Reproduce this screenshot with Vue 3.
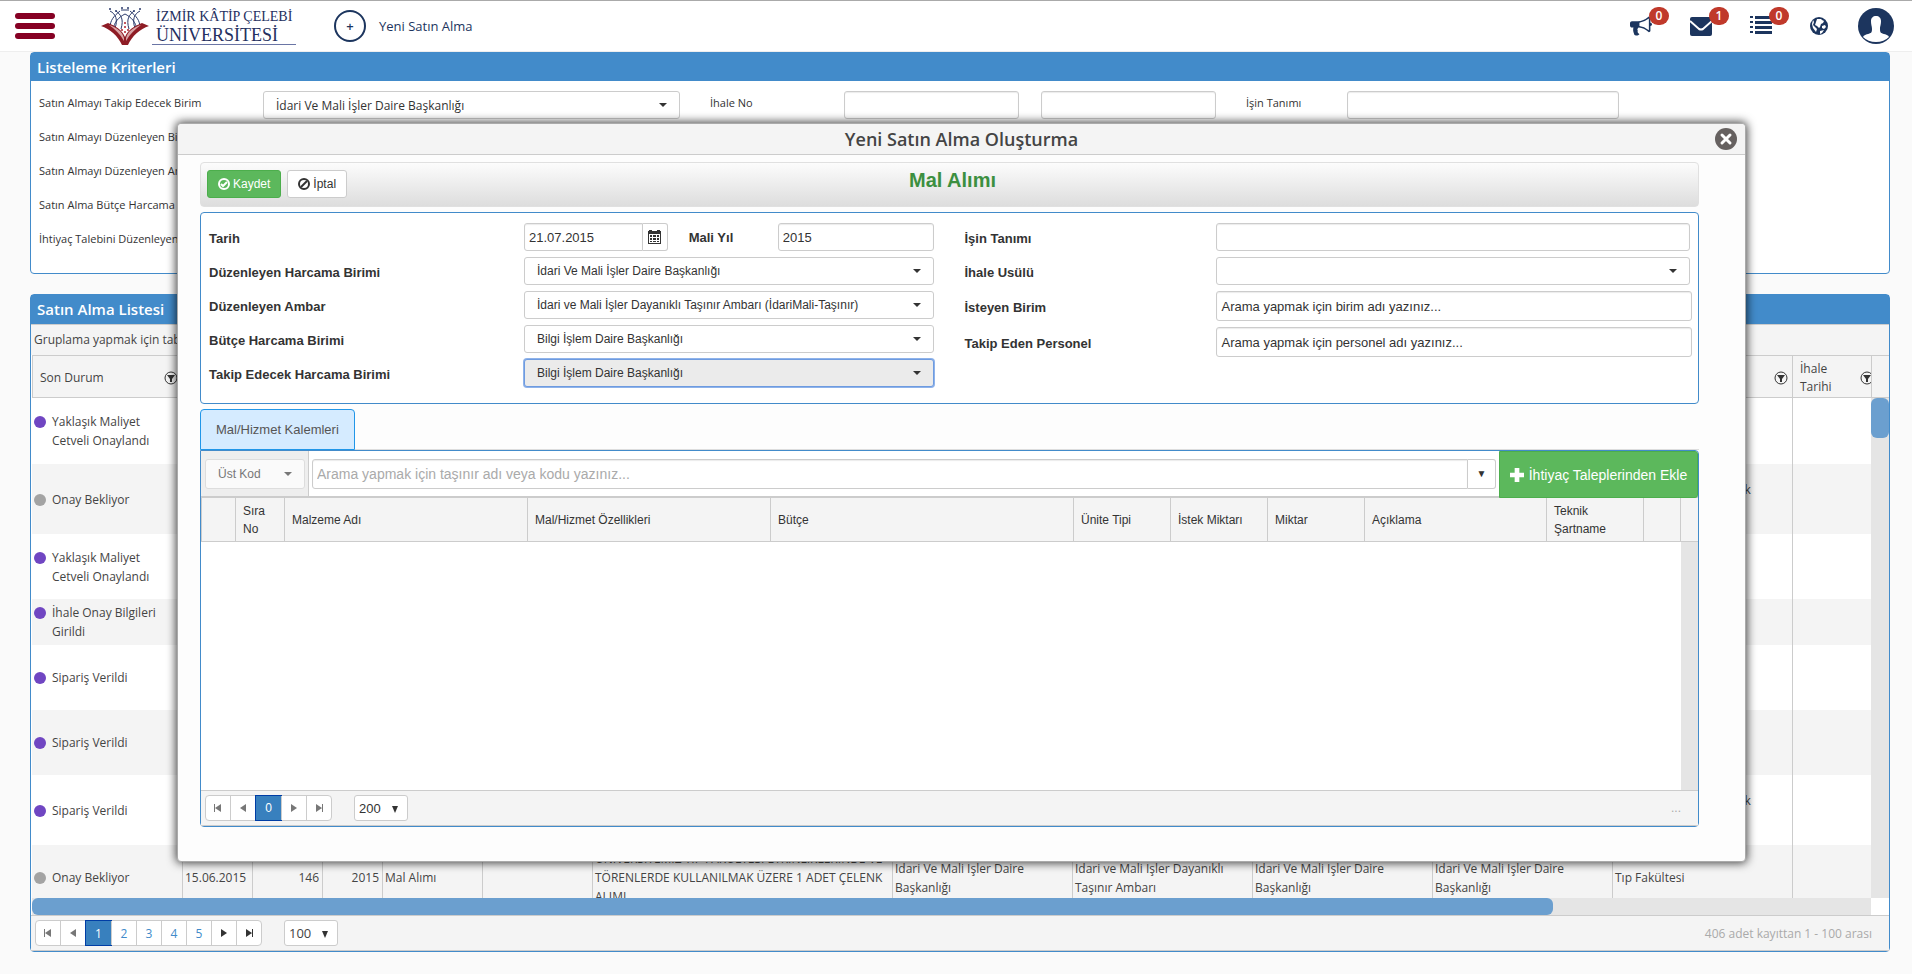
<template>
  <div class="page">
    <header class="topbar">
      <button class="menu-btn" aria-label="Menü"><i></i><i></i><i></i></button>
      <a href="#" class="logo">
        <svg width="50" height="40" viewBox="0 0 50 40">
          <g fill="none" stroke="#2b3a6b" stroke-width="1">
            <path d="M10 5c6 3 8 9 5 17M16 5c5 4 8 8 5 18M40 5c-6 3-8 9-5 17M34 5c-5 4-8 8-5 18" />
            <path d="M10 22c0-8 4-12 10-17M40 22c0-8-4-12-10-17M13 24c1-8 6-13 12-16M37 24c-1-8-6-13-12-16M21 4h8" />
          </g>
          <g fill="#2b3a6b">
            <circle cx="10" cy="3" r="1" /><circle cx="16" cy="5" r="1" /><circle cx="22" cy="2" r="1" />
            <circle cx="28" cy="2" r="1" /><circle cx="34" cy="5" r="1" /><circle cx="40" cy="3" r="1" />
          </g>
          <g fill="#b0202c">
            <circle cx="25" cy="17" r="1" /><circle cx="25" cy="21" r="1" /><circle cx="22" cy="24" r="1" />
            <circle cx="28" cy="24" r="1" /><circle cx="25" cy="26" r="1" />
          </g>
          <path d="M1 20l7-3c8 3 14 7 17 14v8h-3C18 30 10 23 1 20z" fill="#8e1c25" />
          <path d="M49 20l-7-3c-8 3-14 7-17 14v8h3C32 30 40 23 49 20z" fill="#8e1c25" />
          <path d="M9 19c7 2 13 6 15 13v3C20 28 15 23 9 19zM41 19c-7 2-13 6-15 13v3c4-7 9-12 15-16z" fill="#d9a3a5" />
        </svg>
        <span class="logo-text"><b>İZMİR KÂTİP ÇELEBİ</b><span>ÜNİVERSİTESİ</span></span>
      </a>
      <a href="#" class="new-link"><span class="plus">+</span>Yeni Satın Alma</a>
      <nav class="tools">
        <button aria-label="Duyurular">
          <svg width="22" height="22" viewBox="0 0 1792 1792"><path :d="bullhorn" /></svg><em>0</em>
        </button>
        <button aria-label="Mesajlar">
          <svg width="22" height="22" viewBox="0 0 22 22">
            <path d="M2 2h18q2 0 2 2v15q0 2-2 2H2q-2 0-2-2V4q0-2 2-2z" />
            <path d="M0 6l9 8q2 1 4 0l9-8" fill="none" stroke="#fff" stroke-width="2" />
          </svg><em>1</em>
        </button>
        <button aria-label="Görevler">
          <svg width="22" height="22" viewBox="0 0 22 22">
            <path d="M0 1h3v2H0zM5 1h17v3H5zM0 6h3v2H0zM5 6h17v3H5zM0 11h3v2H0zM5 11h17v3H5zM0 16h3v2H0zM5 16h17v3H5z" />
          </svg><em>0</em>
        </button>
        <button aria-label="Dil">
          <svg width="18" height="18" viewBox="0 0 18 18">
            <circle cx="9" cy="9" r="9" />
            <path d="M7 2h4l1 1 2 1-1 2-2 1-1 3-1 1-2-2-2-1 1-3zM3 3l1 2-1 3 2 2 2 2-1 3-3-4-1-4zM12 9l3-1 1 2-2 2-2-1zM10 14l4-1-2 3-2 1z" fill="#fff" />
          </svg>
        </button>
        <button class="avatar" aria-label="Profil">
          <svg width="36" height="36" viewBox="0 0 36 36">
            <circle cx="18" cy="18" r="18" />
            <path d="M18 8c3 0 5 2 5 5 0 4-1 5-1 8 0 4 1 4 4 5 3 1 4 1 5 3q-5 5-13 5T5 29c1-2 2-2 5-3 3-1 4-1 4-5 0-3-1-4-1-8 0-3 2-5 5-5z" fill="#fff" />
          </svg>
        </button>
      </nav>
    </header>

    <section class="panel criteria">
      <h2>Listeleme Kriterleri</h2>
      <div class="criteria-body">
        <div class="criteria-row">
          <label for="takip">Satın Almayı Takip Edecek Birim</label>
          <span class="select"><select id="takip"><option>İdari Ve Mali İşler Daire Başkanlığı</option></select></span>
          <label for="ihale-no" class="inset">İhale No</label>
          <input id="ihale-no" type="text" />
          <span></span>
          <input type="text" aria-label="İhale No bitiş" />
          <label for="tanim" class="inset">İşin Tanımı</label>
          <input id="tanim" type="text" />
        </div>
        <div v-for="(label, i) in criteria" :key="label" class="criteria-row">
          <label :for="'kriter' + i">{{ label }}</label>
          <span class="select"><select :id="'kriter' + i"></select></span>
        </div>
      </div>
    </section>

    <section class="panel list">
      <h2>Satın Alma Listesi</h2>
      <div class="group-bar">Gruplama yapmak için tablo başlıklarını buraya sürükleyiniz</div>
      <div class="list-head">
        <table class="list-table">
          <colgroup><col v-for="(w, i) in listCols" :key="i" :style="{ width: w + 'px' }" /></colgroup>
          <thead>
            <tr>
              <th v-for="(h, i) in listHeads" :key="i">
                <div class="th-inner">
                  <span>{{ h }}</span>
                  <svg width="14" height="14" viewBox="0 0 14 14">
                    <circle cx="7" cy="7" r="6" fill="none" stroke="#333" />
                    <path d="M3 4h8L8 8v3H6V8z" fill="#333" />
                  </svg>
                </div>
              </th>
            </tr>
          </thead>
        </table>
      </div>
      <div class="list-body">
        <div class="list-rows">
          <table class="list-table">
            <colgroup><col v-for="(w, i) in listCols" :key="i" :style="{ width: w + 'px' }" /></colgroup>
            <tbody>
              <tr v-for="(row, i) in rows" :key="i" :style="{ height: row.height + 'px' }">
                <td><div class="status"><i :class="{ waiting: row.waiting }"></i><span>{{ row.status }}</span></div></td>
                <td v-for="n in 12" :key="n" :class="{ num: n === 2 || n === 3 }">{{ row.cells?.[n - 1] }}</td>
              </tr>
            </tbody>
          </table>
        </div>
        <div class="v-scroll"><span></span></div>
      </div>
      <div class="h-scroll"><span></span></div>
      <div class="pager">
        <div class="pages">
          <button class="off" aria-label="İlk"><svg width="8" height="8" viewBox="0 0 8 8"><path d="M0 0h1v8H0zM7 0v8L1 4z" /></svg></button>
          <button class="off" aria-label="Önceki"><svg width="8" height="8" viewBox="0 0 8 8"><path d="M7 0v8L1 4z" /></svg></button>
          <button v-for="n in 5" :key="n" :class="{ current: n === 1 }">{{ n }}</button>
          <button aria-label="Sonraki"><svg width="8" height="8" viewBox="0 0 8 8"><path d="M1 0v8l6-4z" /></svg></button>
          <button aria-label="Son"><svg width="8" height="8" viewBox="0 0 8 8"><path d="M7 0h1v8H7zM1 0v8l6-4z" /></svg></button>
        </div>
        <span class="page-size"><select aria-label="Sayfa boyutu"><option>100</option></select></span>
        <span class="info">406 adet kayıttan 1 - 100 arası</span>
      </div>
    </section>

    <div class="dialog" role="dialog">
      <div class="dialog-title">
        <h1>Yeni Satın Alma Oluşturma</h1>
        <button class="close" aria-label="Kapat">
          <svg width="22" height="22" viewBox="0 0 22 22">
            <circle cx="11" cy="11" r="11" fill="#666160" />
            <path d="M7 7l8 8M15 7l-8 8" stroke="#fff" stroke-width="3" stroke-linecap="round" />
          </svg>
        </button>
      </div>
      <div class="dialog-body">
        <div class="toolbar">
          <div class="actions">
            <button class="btn save">
              <svg width="12" height="12" viewBox="0 0 12 12" fill="none" stroke="#fff" stroke-width="2"><circle cx="6" cy="6" r="5" /><path d="M3 6l2 2 4-4" /></svg>
              Kaydet
            </button>
            <button class="btn">
              <svg width="12" height="12" viewBox="0 0 12 12" fill="none" stroke="#333" stroke-width="2"><circle cx="6" cy="6" r="5" /><path d="M9 3L3 9" /></svg>
              İptal
            </button>
          </div>
          <h3>Mal Alımı</h3>
        </div>

        <form class="form" @submit.prevent>
          <div class="col">
            <div class="field">
              <label for="tarih">Tarih</label>
              <div class="date-row">
                <span class="date">
                  <input id="tarih" v-model="tarih" type="text" />
                  <button type="button" aria-label="Takvim">
                    <svg width="13" height="14" viewBox="0 0 13 14">
                      <path d="M1 0h3v1h5V0h3v1h1v13H0V1h1zM1 4v9h11V4z" fill="#333" fill-rule="evenodd" />
                      <path d="M2 5h2v2H2zM5 5h3v2H5zM9 5h2v2H9zM2 8h2v2H2zM5 8h3v2H5zM9 8h2v2H9zM2 11h2v1H2zM5 11h3v1H5zM9 11h2v1H9z" fill="#333" />
                    </svg>
                  </button>
                </span>
                <label for="yil">Mali Yıl</label>
                <input id="yil" v-model="yil" type="text" />
              </div>
            </div>
            <div v-for="(f, i) in units" :key="f.label" class="field">
              <label :for="'birim' + i">{{ f.label }}</label>
              <span class="select" :class="{ focused: f.focused }"><select :id="'birim' + i"><option>{{ f.value }}</option></select></span>
            </div>
          </div>
          <div class="col right">
            <div class="field">
              <label for="isin-tanimi">İşin Tanımı</label>
              <input id="isin-tanimi" type="text" />
            </div>
            <div class="field">
              <label for="usul">İhale Usülü</label>
              <span class="select"><select id="usul"></select></span>
            </div>
            <div class="field">
              <label for="isteyen">İsteyen Birim</label>
              <input id="isteyen" class="search" type="text" placeholder="Arama yapmak için birim adı yazınız..." />
            </div>
            <div class="field">
              <label for="personel">Takip Eden Personel</label>
              <input id="personel" class="search" type="text" placeholder="Arama yapmak için personel adı yazınız..." />
            </div>
          </div>
        </form>

        <div class="tabs"><button class="tab">Mal/Hizmet Kalemleri</button></div>
        <div class="items">
          <div class="items-bar">
            <div class="code">
              <span class="select"><select aria-label="Üst Kod"><option>Üst Kod</option></select></span>
            </div>
            <div class="item-search">
              <input type="text" aria-label="Taşınır ara" placeholder="Arama yapmak için taşınır adı veya kodu yazınız..." />
              <button aria-label="Aç">▼</button>
            </div>
            <button class="add">
              <svg width="14" height="14" viewBox="0 0 12 12"><path d="M4 0h4v4h4v4H8v4H4V8H0V4h4z" fill="#fff" /></svg>
              İhtiyaç Taleplerinden Ekle
            </button>
          </div>
          <table class="items-table">
            <colgroup><col v-for="(c, i) in itemCols" :key="i" :style="{ width: c.width + 'px' }" /></colgroup>
            <thead><tr><th v-for="(c, i) in itemCols" :key="i">{{ c.title }}</th></tr></thead>
          </table>
          <div class="items-body"><div class="track"></div></div>
          <div class="pager">
            <div class="pages">
              <button class="off" aria-label="İlk"><svg width="8" height="8" viewBox="0 0 8 8"><path d="M0 0h1v8H0zM7 0v8L1 4z" /></svg></button>
              <button class="off" aria-label="Önceki"><svg width="8" height="8" viewBox="0 0 8 8"><path d="M7 0v8L1 4z" /></svg></button>
              <button class="current">0</button>
              <button class="off" aria-label="Sonraki"><svg width="8" height="8" viewBox="0 0 8 8"><path d="M1 0v8l6-4z" /></svg></button>
              <button class="off" aria-label="Son"><svg width="8" height="8" viewBox="0 0 8 8"><path d="M7 0h1v8H7zM1 0v8l6-4z" /></svg></button>
            </div>
            <span class="page-size"><select aria-label="Sayfa boyutu"><option>200</option></select></span>
            <span class="info">...</span>
          </div>
        </div>
      </div>
    </div>
  </div>
</template>

<script setup>
import { ref } from 'vue';

const tarih = ref('21.07.2015');
const yil = ref('2015');

const bullhorn = 'M1664 640q53 0 90.500 37.500t37.500 90.500-37.500 90.500-90.500 37.500v384q0 52-38 90t-90 38q-417-347-812-380-58 19-91 66t-31 100.500 40 92.500q-20 33-23 65.500t6 58 33.500 55 48 50 61.500 50.500q-29 58-111.500 83t-168.500 11.500-132-55.500q-7-23-29.500-87.500t-32-94.500-23-89-15-101 3.500-98.500 22-110.500h-122q-66 0-113-47t-47-113v-192q0-66 47-113t113-47h480q435 0 896-384 52 0 90 38t38 90v384zm-128 604v-954q-394 302-768 343v270q377 42 768 341z';

const criteria = [
  'Satın Almayı Düzenleyen Birim',
  'Satın Almayı Düzenleyen Ambar',
  'Satın Alma Bütçe Harcama Birimi',
  'İhtiyaç Talebini Düzenleyen Birim'
];

const listCols = [150, 70, 70, 60, 100, 110, 300, 180, 180, 180, 180, 180, 86];
const listHeads = ['Son Durum', '', '', '', '', '', '', '', '', '', '', '', 'İhale Tarihi'];

const idari = 'İdari Ve Mali İşler Daire Başkanlığı';
const faculty = [...Array(10).fill(''), 'Mühendislik ve Mimarlık Fakültesi'];
const rows = [
  { status: 'Yaklaşık Maliyet Cetveli Onaylandı', height: 66 },
  { status: 'Onay Bekliyor', waiting: true, height: 70, cells: faculty },
  { status: 'Yaklaşık Maliyet Cetveli Onaylandı', height: 65 },
  { status: 'İhale Onay Bilgileri Girildi', height: 46 },
  { status: 'Sipariş Verildi', height: 65 },
  { status: 'Sipariş Verildi', height: 65 },
  { status: 'Sipariş Verildi', height: 70, cells: faculty },
  {
    status: 'Onay Bekliyor',
    waiting: true,
    height: 65,
    cells: [
      '15.06.2015', '146', '2015', 'Mal Alımı', '',
      'ÜNİVERSİTEMİZ TIP FAKÜLTESİ ETKİNLİKLERİNDE VE TÖRENLERDE KULLANILMAK ÜZERE 1 ADET ÇELENK ALIMI',
      idari, 'İdari ve Mali İşler Dayanıklı Taşınır Ambarı', idari, idari, 'Tıp Fakültesi'
    ]
  }
];

const units = [
  { label: 'Düzenleyen Harcama Birimi', value: idari },
  { label: 'Düzenleyen Ambar', value: 'İdari ve Mali İşler Dayanıklı Taşınır Ambarı (İdariMali-Taşınır)' },
  { label: 'Bütçe Harcama Birimi', value: 'Bilgi İşlem Daire Başkanlığı' },
  { label: 'Takip Edecek Harcama Birimi', value: 'Bilgi İşlem Daire Başkanlığı', focused: true }
];

const itemCols = [
  { title: '', width: 34 },
  { title: 'Sıra No', width: 49 },
  { title: 'Malzeme Adı', width: 243 },
  { title: 'Mal/Hizmet Özellikleri', width: 243 },
  { title: 'Bütçe', width: 303 },
  { title: 'Ünite Tipi', width: 97 },
  { title: 'İstek Miktarı', width: 97 },
  { title: 'Miktar', width: 97 },
  { title: 'Açıklama', width: 182 },
  { title: 'Teknik Şartname', width: 97 },
  { title: '', width: 37 },
  { title: '', width: 18 }
];
</script>

<style>
body {
  margin: 0;
  background: #fafafa;
}
</style>

<style scoped>
* {
  box-sizing: border-box;
}

.page {
  display: flex;
  flex-direction: column;
  height: 100vh;
  min-height: 800px;
  padding-bottom: 22px;
  overflow: hidden;
  font-family: "Open Sans", "Liberation Sans", sans-serif;
  font-size: 12px;
  color: #444;
}

button,
input,
select {
  margin: 0;
  font: inherit;
  color: inherit;
}

button {
  display: flex;
  align-items: center;
  justify-content: center;
  padding: 0;
  border: 0;
  background: none;
  cursor: pointer;
}

h1,
h2,
h3 {
  margin: 0;
}

/* top bar */
.topbar {
  display: flex;
  align-items: center;
  flex: none;
  height: 52px;
  padding: 0 18px 0 15px;
  background: #fff;
  border-top: 1px solid #aaa;
  border-bottom: 1px solid #eee;
}

.menu-btn {
  flex-direction: column;
  gap: 4px;
  width: 40px;
}

.menu-btn i {
  width: 40px;
  height: 6px;
  border-radius: 3px;
  background: #850023;
}

.logo {
  display: flex;
  align-items: center;
  gap: 2px;
  margin-left: 45px;
  color: #25305f;
  text-decoration: none;
}

.logo-text {
  display: flex;
  flex-direction: column;
  width: 144px;
  padding: 0 4px;
  border-bottom: 1px solid #6a75a5;
  font-family: "Liberation Serif", serif;
  font-size: 18px;
  line-height: 18px;
}

.logo-text b {
  font-size: 14px;
  font-weight: 400;
  white-space: nowrap;
}

.new-link {
  display: flex;
  align-items: center;
  gap: 13px;
  margin-left: 38px;
  color: #1c355e;
  font-size: 13px;
  text-decoration: none;
}

.plus {
  display: flex;
  align-items: center;
  justify-content: center;
  width: 32px;
  height: 32px;
  border: 2px solid #1c355e;
  border-radius: 50%;
  font-weight: 600;
}

.tools {
  display: flex;
  align-items: center;
  gap: 38px;
  margin-left: auto;
}

.tools button {
  position: relative;
}

.tools .avatar {
  margin-left: -8px;
}

.tools svg {
  fill: #1c355e;
}

.tools em {
  position: absolute;
  top: -8px;
  left: 19px;
  width: 20px;
  height: 18px;
  border-radius: 9px;
  background: #c0392b;
  color: #fff;
  font-size: 12px;
  font-style: normal;
  font-weight: 600;
  line-height: 18px;
  text-align: center;
}

/* panels */
.panel {
  margin: 0 22px 0 30px;
  border: 1px solid #428bca;
  border-radius: 4px;
  background: #fff;
}

.panel h2 {
  padding-left: 6px;
  background: #428bca;
  color: #fff;
  font-size: 15px;
  font-weight: 600;
  line-height: 28px;
}

.criteria {
  flex: none;
}

.criteria-body {
  padding: 10px 6px 12px 8px;
}

.criteria-row {
  display: grid;
  grid-template-columns: 224px 417fr 164px 175fr 22px 175fr 131px 272fr 264fr;
  height: 34px;
  color: #333;
}

.criteria-row label {
  font-size: 11px;
  line-height: 24px;
  white-space: nowrap;
}

.criteria-row .inset {
  padding-left: 30px;
}

input[type="text"],
.select,
.page-size {
  width: 100%;
  min-width: 0;
  height: 28px;
  border: 1px solid #ccc;
  border-radius: 3px;
  background: #fff;
}

input[type="text"] {
  padding: 0 4px;
  box-shadow: inset 0 1px 1px rgba(0, 0, 0, 0.08);
  outline: none;
}

.select,
.page-size {
  position: relative;
  display: block;
}

.select select,
.page-size select {
  appearance: none;
  display: block;
  width: 100%;
  height: 100%;
  padding: 0 30px 0 12px;
  border: 0;
  background: none;
  outline: none;
}

.select::after {
  content: "";
  position: absolute;
  top: 50%;
  right: 12px;
  margin-top: -2px;
  border: 4px solid transparent;
  border-top-color: #333;
  border-bottom: 0;
  pointer-events: none;
}

.list {
  display: flex;
  flex-direction: column;
  flex: 1;
  min-height: 0;
  margin-top: 20px;
}

.list h2 {
  line-height: 29px;
}

.group-bar {
  height: 31px;
  padding-left: 3px;
  border-top: 1px solid #ccc;
  background: #f4f4f4;
  line-height: 30px;
  white-space: nowrap;
}

.list-head {
  display: flex;
  flex: none;
  margin-left: 1px;
  padding-right: 18px;
  border-top: 1px solid #ccc;
  border-bottom: 1px solid #ccc;
  background: #f4f4f4;
  overflow: hidden;
}

/* filler above the vertical scrollbar */
.list-head::after {
  content: "";
  flex: none;
  width: 18px;
  margin-right: -18px;
  border-left: 1px solid #ccc;
  background: #f4f4f4;
}

.list-table {
  flex: none;
  width: calc(100% + 7px);
  margin-right: -7px;
  border-collapse: separate;
  border-spacing: 0;
  table-layout: fixed;
}

.list-table th {
  height: 41px;
  padding: 2px 4px 0 7px;
  border-left: 1px solid #ccc;
  font-weight: 400;
  line-height: 18px;
  text-align: left;
}

.th-inner {
  display: flex;
  align-items: center;
  justify-content: space-between;
}

.th-inner svg {
  flex: none;
}

.list-body {
  display: flex;
  flex: 1;
  min-height: 0;
}

.list-rows {
  flex: 1;
  overflow: hidden;
  margin-left: 1px;
}

.list-table td {
  padding: 0 3px 0 2px;
  border-left: 1px solid #ccc;
  line-height: 19px;
}

.list-table td:first-child {
  border-left: 0;
}

.list-table tr:nth-child(even) td {
  background: #f4f4f4;
}

.list-table .num {
  text-align: right;
}

.status {
  display: flex;
  gap: 6px;
}

.status i {
  flex: none;
  width: 12px;
  height: 12px;
  margin-top: 4px;
  border-radius: 50%;
  background: #7046c2;
}

.status .waiting {
  background: #a3a3a3;
}

.status span {
  width: 106px;
}

.v-scroll {
  width: 18px;
  background: #e5e5e5;
}

.v-scroll span {
  display: block;
  height: 40px;
  border-radius: 6px;
  background: #6b9fcf;
}

.h-scroll {
  flex: none;
  height: 17px;
  margin: 0 18px 0 1px;
  background: #e5e5e5;
}

.h-scroll span {
  display: block;
  width: 82.7%;
  height: 17px;
  border-radius: 6px;
  background: #6b9fcf;
}

.pager {
  display: flex;
  align-items: center;
  flex: none;
  height: 36px;
  padding: 0 17px 0 4px;
  border-top: 1px solid #ccc;
  border-bottom: 1px solid #ccc;
  background: #f4f4f4;
}

.pages {
  display: flex;
  border: 1px solid #ccc;
  border-radius: 4px;
  background: #fff;
}

.pages button {
  width: 25px;
  height: 24px;
  border-left: 1px solid #ccc;
  color: #428bca;
}

.pages button:first-child {
  width: 24px;
  border-left: 0;
}

.pages svg {
  fill: #333;
}

.pages .off svg {
  fill: #777;
}

.pages .current {
  width: 27px;
  height: 26px;
  margin: -1px -1px -1px 0;
  border: 1px solid #003da5;
  background: #3880be;
  color: #fff;
}

.page-size {
  width: 54px;
  height: 26px;
  margin-left: 22px;
  font-size: 13px;
}

.page-size select {
  padding: 0 0 0 4px;
}

.page-size::after {
  content: "";
  position: absolute;
  top: 10px;
  right: 9px;
  border: 3px solid transparent;
  border-top: 7px solid #333;
  border-bottom: 0;
  pointer-events: none;
}

.info {
  margin-left: auto;
  color: #aaa;
}

/* dialog */
.dialog {
  position: absolute;
  top: 123px;
  right: 166px;
  bottom: 112px;
  left: 177px;
  display: flex;
  flex-direction: column;
  min-height: 600px;
  border: 1px solid #aaa;
  border-radius: 4px;
  background: #fdfdfd;
  box-shadow: 0 0 10px 1px rgba(0, 0, 0, 0.75);
  font-family: "Liberation Sans", Arial, sans-serif;
  color: #333;
}

.dialog-title {
  display: flex;
  align-items: center;
  flex: none;
  height: 31px;
  padding-right: 8px;
  border-bottom: 1px solid #ccc;
  border-radius: 4px 4px 0 0;
  background: #f4f4f4;
}

.dialog-title h1 {
  flex: 1;
  padding-left: 30px;
  color: #444;
  font-family: "Open Sans", sans-serif;
  font-size: 18px;
  font-weight: 600;
  line-height: 30px;
  text-align: center;
}

.dialog-body {
  display: flex;
  flex-direction: column;
  flex: 1;
  min-height: 0;
  padding: 7px 46px 34px 22px;
}

.toolbar {
  display: grid;
  grid-template-columns: 1fr auto 1fr;
  align-items: start;
  flex: none;
  height: 45px;
  padding: 7px 0 0 6px;
  border: 1px solid #e0e0e0;
  border-radius: 4px;
  background: linear-gradient(#fcfcfc, #ddd);
}

.toolbar h3 {
  color: #3c8f40;
  font-size: 20px;
  line-height: 20px;
}

.actions {
  display: flex;
  gap: 6px;
}

.btn {
  gap: 3px;
  height: 28px;
  padding: 0 10px;
  border: 1px solid #ccc;
  border-radius: 3px;
  background: #fff;
}

.save {
  border-color: #4cae4c;
  background: #5cb85c;
  color: #fff;
}

.form {
  display: grid;
  grid-template-columns: 725fr 727fr;
  gap: 30px;
  flex: none;
  margin-top: 5px;
  padding: 10px 6px 16px 8px;
  border: 1px solid #428bca;
  border-radius: 4px;
  background: #fff;
}

.col {
  display: flex;
  flex-direction: column;
  gap: 6px;
}

.field {
  display: grid;
  grid-template-columns: 315px 1fr;
  align-items: center;
}

.right .field {
  grid-template-columns: 252px 1fr;
  padding-right: 2px;
}

.form label {
  font-size: 13px;
  font-weight: 700;
}

.form .field > label {
  padding-top: 2px;
}

.form input {
  font-size: 13px;
}

.right .search {
  width: calc(100% + 2px);
  height: 30px;
}

.form .search::placeholder {
  color: #333;
}

.form .focused {
  border-color: #6e9be0;
  background: #ebebeb;
  box-shadow: 0 0 0 1px #8fb3ea;
}

.date-row {
  display: grid;
  grid-template-columns: 143fr 90px 156fr;
  column-gap: 10px;
  align-items: center;
}

.date-row label {
  padding-left: 11px;
}

.date {
  display: flex;
}

.date input {
  border-radius: 3px 0 0 3px;
}

.date button {
  flex: none;
  width: 25px;
  border: 1px solid #ccc;
  border-left: 0;
  border-radius: 0 3px 3px 0;
}

.tabs {
  display: flex;
  flex: none;
  margin-top: 5px;
  border-bottom: 1px solid #ddd;
}

.tab {
  height: 41px;
  margin-bottom: -1px;
  padding: 0 15px;
  border: 1px solid #2196e8;
  border-radius: 4px 4px 0 0;
  background: #d5ebff;
  color: #555;
  font-size: 13px;
}

.items {
  display: flex;
  flex-direction: column;
  flex: 1;
  min-height: 0;
  border: 1px solid #428bca;
  border-radius: 0 4px 4px 4px;
  background: #fff;
}

.items-bar {
  display: flex;
  align-items: center;
  flex: none;
  height: 47px;
  border-bottom: 2px solid #ccc;
}

.code {
  width: 108px;
  height: 100%;
  padding: 8px 3px 0 4px;
  border-right: 1px solid #ccc;
  background: #eee;
  color: #777;
}

.code .select {
  height: 30px;
  border-color: #ddd;
  background: #fafafa;
}

.code .select::after {
  border-top-color: #777;
}

.item-search {
  display: flex;
  flex: 1;
  height: 30px;
  margin: 0 3px;
}

.item-search input {
  flex: 1;
  height: 30px;
  border-radius: 3px 0 0 3px;
  font-size: 14px;
}

.item-search input::placeholder {
  color: #aaa;
}

.item-search button {
  width: 28px;
  border: 1px solid #ccc;
  border-left: 0;
  border-radius: 0 3px 3px 0;
  font-size: 10px;
}

.add {
  gap: 5px;
  width: 199px;
  height: 47px;
  margin-bottom: -2px;
  border: 1px solid #4cae4c;
  border-radius: 0 3px 3px 0;
  background: #5cb85c;
  color: #fff;
  font-size: 14px;
  white-space: nowrap;
}

.items-table {
  flex: none;
  width: 100%;
  border-collapse: separate;
  border-spacing: 0;
  border-bottom: 1px solid #ccc;
  background: #f4f4f4;
  table-layout: fixed;
}

.items-table th {
  height: 43px;
  padding: 0 20px 0 7px;
  border-left: 1px solid #ccc;
  font-weight: 400;
  line-height: 18px;
  text-align: left;
  white-space: nowrap;
}

.items-table th:last-child,
.items-table th:nth-last-child(2) {
  padding: 0;
}

.items-table th:nth-child(2),
.items-table th:nth-child(10) {
  white-space: normal;
}

.items-body {
  display: flex;
  justify-content: flex-end;
  flex: 1;
  min-height: 0;
}

.track {
  width: 17px;
  background: #e5e5e5;
}
</style>
